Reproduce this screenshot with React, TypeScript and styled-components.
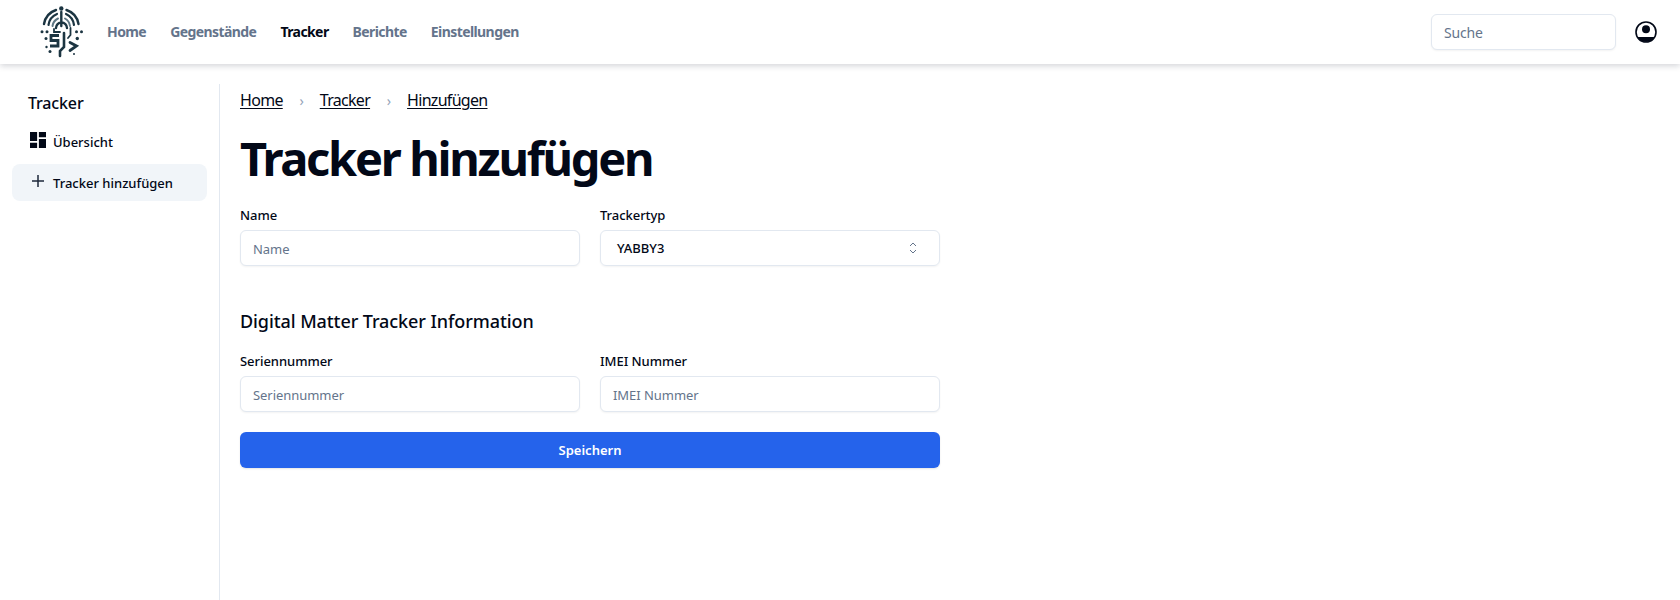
import React from "react";
import styled, { createGlobalStyle } from "styled-components";

const FONT = `"Noto Sans", "Open Sans", sans-serif`;

const Global = createGlobalStyle`
  html, body { margin: 0; padding: 0; background: #fff; }
  body { font-family: ${FONT}; color: #020817; }
  * { box-sizing: border-box; }
`;
const Page = styled.div`height: 600px; overflow: hidden; display: flex; flex-direction: column;`;
const Header = styled.header`
  height: 64px; flex: none; display: flex; align-items: center; padding: 0 22px 0 40px;
  background: #fff; box-shadow: 0 2px 6px rgba(15, 23, 42, 0.18);
`;
const LogoBox = styled.div`width: 44px; height: 56px; margin-right: 23px; flex: none;`;
const Nav = styled.nav`display: flex; gap: 24px; flex: 1;`;
const NavLink = styled.a<{ $active?: boolean }>`
  font-size: 14px; font-weight: 700; line-height: 20px; letter-spacing: -0.58px;
  color: ${(p) => (p.$active ? "#020817" : "#64748b")};
`;
const Search = styled.input`
  width: 185px; height: 36px; border: 1px solid #e2e8f0; border-radius: 6px; padding: 1px 12px 0 12px;
  font: 400 14px ${FONT}; letter-spacing: -0.2px; margin-right: 18px; box-shadow: 0 1px 2px rgba(0,0,0,.05);
  &::placeholder { color: #64748b; }
`;
const Body = styled.div`flex: 1; display: flex; padding-top: 20px;`;
const Side = styled.aside`
  width: 220px; flex: none; border-right: 1px solid #e2e8f0; padding: 0 12px;
`;
const SideTitle = styled.h2`
  margin: 3px 0 4px; padding: 0 16px; font-size: 16px; line-height: 32px; font-weight: 500; letter-spacing: -0.15px;
`;
const SideItem = styled.a<{ $active?: boolean }>`
  display: flex; align-items: center; gap: 7px; height: 37px; padding: 0 18px;
  margin-bottom: 4px; border-radius: 8px; font-size: 13px; font-weight: 500;
  background: ${(p) => (p.$active ? "#f1f5f9" : "transparent")};
  & > svg { margin-top: -4px; }
`;
const Main = styled.main`flex: none; width: 720px; padding: 0 0 0 20px;`;
const Crumbs = styled.div`
  display: flex; align-items: center; gap: 16px; height: 32px; font-size: 16px; letter-spacing: -0.7px;
`;
const Crumb = styled.a`text-decoration: underline; text-underline-offset: 2px;`;
const Sep = styled.span`width: 5px; text-align: center; color: #94a3b8; font-size: 14px;`;
const Title = styled.h1`
  margin: 12px 0 20px; font-size: 47px; line-height: 60px; font-weight: 700; letter-spacing: -2.3px;
`;
const Grid = styled.div`display: grid; grid-template-columns: 1fr 1fr; gap: 20px;`;
const Field = styled.label`display: flex; flex-direction: column; gap: 8px;`;
const Label = styled.span`font-size: 13px; line-height: 14px; font-weight: 500; letter-spacing: -0.05px;`;
const Input = styled.input`
  height: 36px; width: 100%; border: 1px solid #e2e8f0; border-radius: 6px; padding: 1px 12px 0 12px;
  font: 400 13px ${FONT}; letter-spacing: -0.05px; box-shadow: 0 1px 2px rgba(0,0,0,.05); background: #fff;
  &::placeholder { color: #64748b; }
`;
const Select = styled.div`
  height: 36px; border: 1px solid #e2e8f0; border-radius: 6px; padding: 0 20px 0 16px;
  display: flex; align-items: center; justify-content: space-between; font-size: 13px; font-weight: 500;
  box-shadow: 0 1px 2px rgba(0,0,0,.05);
`;
const Section = styled.h3`margin: 41px 0 19px; font-size: 18px; line-height: 28px; font-weight: 500; letter-spacing: -0.08px;`;
const Save = styled.button`
  width: 100%; height: 36px; margin-top: 20px; border: 0; border-radius: 6px; background: #2563eb;
  color: #fff; font: 600 13px ${FONT}; box-shadow: 0 1px 2px rgba(0,0,0,.1);
`;

const Logo = () => (
  <svg width="44" height="56" viewBox="0 0 44 56" fill="none" stroke="#1c3542" strokeLinecap="round">
    <circle cx="21.3" cy="4.5" r="2.2" fill="#1c3542" stroke="none" />
    <path d="M4 20a18 18 0 0 1 12-14M26.5 6a18 18 0 0 1 12 14" strokeWidth="2.4" />
    <path d="M8.5 21a14 14 0 0 1 8.5-11M26 10a14 14 0 0 1 8 11" strokeWidth="2.2" />
    <path d="M12.5 22a10 10 0 0 1 5.5-7.500M25 14.500a10 10 0 0 1 5 7.500" strokeWidth="2" stroke="#5f7784" />
    <path d="M21.3 8v14M16 24a5.500 5.500 0 0 1 11 0" strokeWidth="2.400" />
    <path d="M30.500 24v7l-2.500 3M14 25v3h6" strokeWidth="1.800" />
    <path d="M19 31.500h-8v5h7v5.500h-8" strokeWidth="2.800" strokeLinecap="butt" />
    <path d="M24 29v14l-4 4v5" strokeWidth="2.600" />
    <path d="M30 38.500l6.500 3.500-6.500 4.500" strokeWidth="2.800" />
    <g fill="#1c3542" stroke="none">
      <circle cx="2" cy="27.700" r="1.500" /><circle cx="7" cy="27.700" r="1.500" /><circle cx="36.500" cy="27.700" r="1.500" /><circle cx="41.500" cy="27.700" r="1.500" />
      <circle cx="6" cy="34.500" r="1.500" /><circle cx="37.300" cy="34.500" r="1.700" /><circle cx="6.500" cy="43" r="1.200" /><circle cx="10" cy="47.500" r="1.500" />
      <circle cx="34" cy="50" r="1" />
    </g>
  </svg>
);
const User = () => (
  <svg width="24" height="24" viewBox="0 0 24 24">
    <defs><clipPath id="c"><circle cx="12" cy="12" r="10" /></clipPath></defs>
    <circle cx="12" cy="9.300" r="4" fill="#020817" />
    <path d="M2 17h20v6H2z" fill="#020817" clipPath="url(#c)" />
    <circle cx="12" cy="12" r="10" fill="none" stroke="#020817" strokeWidth="1.600" />
  </svg>
);
const Dashboard = () => (
  <svg width="16" height="16" viewBox="3 3 18 18" fill="#020817">
    <path d="M3 13h8V3H3zm0 8h8v-6H3zm10 0h8V11h-8zm0-18v6h8V3z" />
  </svg>
);
const Plus = () => (
  <svg width="16" height="16" viewBox="0 0 16 16" stroke="#1e293b" strokeWidth="1.500" fill="none">
    <path d="M8 2v12M2 8h12" />
  </svg>
);
const Chevrons = () => (
  <svg width="12" height="14" viewBox="0 0 12 14" fill="none" stroke="#64748b" strokeWidth="1">
    <path d="M3 5L6 2 9 5M3 9L6 12 9 9" />
  </svg>
);

export default function App() {
  return (
    <Page>
      <Global />
      <Header>
        <LogoBox><Logo /></LogoBox>
        <Nav>
          <NavLink>Home</NavLink>
          <NavLink>Gegenstände</NavLink>
          <NavLink $active>Tracker</NavLink>
          <NavLink>Berichte</NavLink>
          <NavLink>Einstellungen</NavLink>
        </Nav>
        <Search placeholder="Suche" />
        <User />
      </Header>
      <Body>
        <Side>
          <SideTitle>Tracker</SideTitle>
          <SideItem><Dashboard />Übersicht</SideItem>
          <SideItem $active><Plus />Tracker hinzufügen</SideItem>
        </Side>
        <Main>
          <Crumbs>
            <Crumb>Home</Crumb><Sep>›</Sep><Crumb>Tracker</Crumb><Sep>›</Sep><Crumb>Hinzufügen</Crumb>
          </Crumbs>
          <Title>Tracker hinzufügen</Title>
          <Grid>
            <Field><Label>Name</Label><Input placeholder="Name" /></Field>
            <Field><Label>Trackertyp</Label><Select>YABBY3<Chevrons /></Select></Field>
          </Grid>
          <Section>Digital Matter Tracker Information</Section>
          <Grid>
            <Field><Label>Seriennummer</Label><Input placeholder="Seriennummer" /></Field>
            <Field><Label>IMEI Nummer</Label><Input placeholder="IMEI Nummer" /></Field>
          </Grid>
          <Save>Speichern</Save>
        </Main>
      </Body>
    </Page>
  );
}
